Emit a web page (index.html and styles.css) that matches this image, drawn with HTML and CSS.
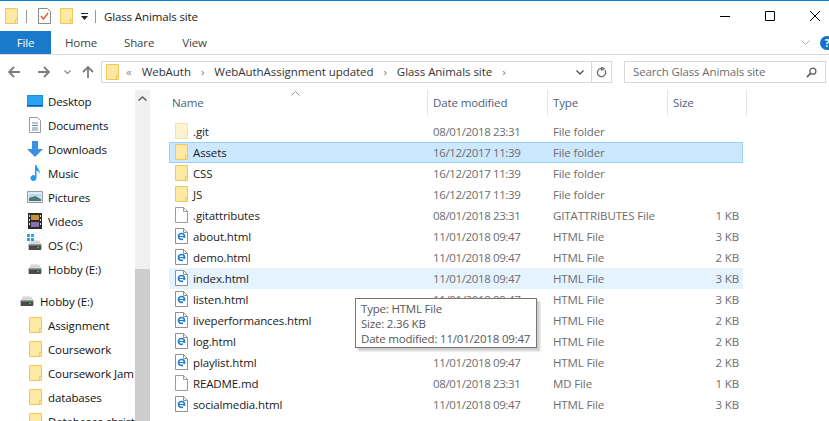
FILE: index.html
```html
<!DOCTYPE html>
<html lang="en">
<head>
    <meta charset="UTF-8">
    <meta name="viewport" content="width=device-width, initial-scale=1.0">
    <title>Glass Animals site</title>
    <link rel="stylesheet" href="styles.css">
</head>
<body>
    <svg class="defs" width="0" height="0">
        <symbol id="folder" viewBox="0 0 13 16">
            <path d="M.5.5h12v15H.5z" fill="#fde9a4" stroke="#eec95a"/>
            <path d="M10.5 15.5v-4h2" fill="none" stroke="#eec95a"/>
        </symbol>
        <symbol id="page" viewBox="0 0 13 16">
            <path d="M.5.5h8l4 4v11H.5z" fill="#fff" stroke="#9a9a9a"/>
            <path d="M8.500.5v4h4" fill="none" stroke="#9a9a9a"/>
        </symbol>
        <symbol id="html" viewBox="0 0 13 16">
            <path d="M.5.5h8l4 4v11H.5z" fill="#fff" stroke="#8b9099"/>
            <path d="M8.500.5v4h4" fill="none" stroke="#8b9099"/>
            <circle cx="6.500" cy="8.500" r="3" fill="none" stroke="#1f7fd0" stroke-width="1.700"/>
            <path d="M4 8.500h5" stroke="#1f7fd0"/>
            <path d="M8 10h2v2H8z" fill="#fff"/>
        </symbol>
        <symbol id="drive" viewBox="0 0 15 11">
            <path d="M3 .5h9L14.500 5h-14z" fill="#d8d8d8"/>
            <path d="M.5 5h14v5a1 1 0 0 1-1 1h-12a1 1 0 0 1-1-1z" fill="#4a4a4a"/>
            <path d="M.5 5h14v1h-14z" fill="#9c9c9c"/>
            <path d="M10 7.500h2v1.500h-2z" fill="#35d04a"/>
        </symbol>
    </svg>

    <div class="titlebar">
        <svg class="ico-folder"><use href="#folder"/></svg>
        <span class="qa-sep first"></span>
        <svg class="ico-props" viewBox="0 0 13 16">
            <path d="M.5.5h9l3 3v12H.5z" fill="#fbfbfb" stroke="#8a8a8a"/>
            <path d="M3 8l2.500 3L10 5" fill="none" stroke="#e0602f" stroke-width="1.400"/>
        </svg>
        <svg class="ico-folder second"><use href="#folder"/></svg>
        <svg class="qa-drop" viewBox="0 0 7 7">
            <path d="M0 0h7v1H0zM0 3h7L3.500 7z" fill="#222"/>
        </svg>
        <span class="qa-sep"></span>
        <span class="title">Glass Animals site</span>
        <div class="winbtns">
            <svg viewBox="0 0 10 10" class="winbtn"><path d="M0 5.500h10" stroke="#000"/></svg>
            <svg viewBox="0 0 10 10" class="winbtn"><path d="M.5.500h9v9h-9z" fill="none" stroke="#000"/></svg>
            <svg viewBox="0 0 10 10" class="winbtn"><path d="M0 0l10 10M10 0L0 10" stroke="#000"/></svg>
        </div>
    </div>

    <div class="ribbon">
        <span class="tab file">File</span>
        <span class="tab home">Home</span>
        <span class="tab share">Share</span>
        <span class="tab">View</span>
        <svg class="rib-chev" viewBox="0 0 9 5"><path d="M.5.500l4 4 4-4" fill="none" stroke="#a9a9a9"/></svg>
        <span class="help">?</span>
    </div>

    <div class="navbar">
        <svg class="nav-ico" viewBox="0 0 12 12"><path d="M12 6H1.500M6 1L1 6l5 5" fill="none" stroke="#7d7d7d" stroke-width="1.800"/></svg>
        <svg class="nav-ico fwd" viewBox="0 0 12 12"><path d="M0 6h10.500M6 1l5 5-5 5" fill="none" stroke="#7d7d7d" stroke-width="1.800"/></svg>
        <svg class="nav-drop" viewBox="0 0 7 4"><path d="M.5.500l3 3 3-3" fill="none" stroke="#8a8a8a" stroke-width="1.200"/></svg>
        <svg class="nav-ico up" viewBox="0 0 12 12"><path d="M6 12V1.500M1 6l5-5 5 5" fill="none" stroke="#7d7d7d" stroke-width="1.800"/></svg>
        <div class="address">
            <svg class="ico-folder"><use href="#folder"/></svg>
            <span class="crumb crumb-more">«</span>
            <span class="crumb">WebAuth</span>
            <span class="crumb crumb-arrow">›</span>
            <span class="crumb">WebAuthAssignment updated</span>
            <span class="crumb crumb-arrow">›</span>
            <span class="crumb">Glass Animals site</span>
            <span class="crumb crumb-arrow">›</span>
            <svg class="addr-chev" viewBox="0 0 8 5"><path d="M.5.500L4 4 7.500.500" fill="none" stroke="#555" stroke-width="1.400"/></svg>
            <span class="addr-refresh">
                <svg viewBox="0 0 12 12"><path d="M9.800 3.500A4.500 4.500 0 1 1 6 1.500M6 0v3.500l3-1.700z" fill="none" stroke="#707070" stroke-width="1.400"/></svg>
            </span>
        </div>
        <div class="search">
            <span class="search-text">Search Glass Animals site</span>
            <svg viewBox="0 0 12 12"><circle cx="7.500" cy="4.500" r="3.300" fill="none" stroke="#666" stroke-width="1.400"/><path d="M5 7l-4 4" stroke="#666" stroke-width="2"/></svg>
        </div>
    </div>

    <div class="main">
        <div class="side">
            <ul class="tree">
                <li><svg class="tree-ico" viewBox="0 0 16 12"><path d="M0 0h16v12H0z" fill="#1c8fe6"/><path d="M1 1h14v9H1z" fill="#2aa3f5"/><path d="M0 10.500h16" stroke="#0c5fa8"/></svg>Desktop</li>
                <li><svg class="tree-ico" viewBox="0 0 16 16"><path d="M2.500.5h8l3 3v12h-11z" fill="#fff" stroke="#9a9a9a"/><path d="M5 6h6M5 8.500h6M5 11h6M5 13h6" stroke="#5f8fb8"/></svg>Documents</li>
                <li><svg class="tree-ico" viewBox="0 0 16 16"><path d="M5 0h6v8h5l-8 8-8-8h5z" fill="#3b8fe0"/></svg>Downloads</li>
                <li><svg class="tree-ico" viewBox="0 0 16 16"><path d="M8 0h1.500c0 3 4 4 3 9C12 6.500 10.500 6 9.500 5.500V13a3 3 0 1 1-1.500-2.600z" fill="#1e9cf0"/></svg>Music</li>
                <li><svg class="tree-ico" viewBox="0 0 16 12"><path d="M.5.500h15v11H.5z" fill="#dfe9ee" stroke="#9a9a9a"/><path d="M2 3h12v3l-12 1z" fill="#bcd7ea"/><path d="M2 7l6-2 6 3v2H2z" fill="#4c7a7c"/></svg>Pictures</li>
                <li><svg class="tree-ico" viewBox="0 0 14 16"><path d="M0 0h14v16H0z" fill="#2c2c2c"/><path d="M3 2h8v5H3z" fill="#c98f3c"/><path d="M3 9h8v5H3z" fill="#8a6fb0"/><path d="M1 2h1v2H1zM1 6h1v2H1zM1 10h1v2H1zM12 2h1v2h-1zM12 6h1v2h-1zM12 10h1v2h-1z" fill="#ddd"/></svg>Videos</li>
                <li class="os"><span class="os-ico"><svg class="win-logo" viewBox="0 0 7 7"><path d="M0 0h3v3H0zM4 0h3v3H4zM0 4h3v3H0zM4 4h3v3H4z" fill="#29a8ec"/></svg><svg class="tree-ico drive-ico"><use href="#drive"/></svg></span>OS (C:)</li>
                <li><svg class="tree-ico drive-ico"><use href="#drive"/></svg>Hobby (E:)</li>
            </ul>
            <ul class="tree second">
                <li class="root"><svg class="tree-ico drive-ico"><use href="#drive"/></svg>Hobby (E:)</li>
                <li><svg class="tree-folder"><use href="#folder"/></svg>Assignment</li>
                <li><svg class="tree-folder"><use href="#folder"/></svg>Coursework</li>
                <li><svg class="tree-folder"><use href="#folder"/></svg>Coursework Jam</li>
                <li><svg class="tree-folder"><use href="#folder"/></svg>databases</li>
                <li><svg class="tree-folder"><use href="#folder"/></svg>Databases christ</li>
            </ul>
        </div>
        <div class="scroll">
            <svg class="scroll-up" viewBox="0 0 9 5"><path d="M.5 4.500l4-3.500 4 3.500" fill="none" stroke="#606060" stroke-width="1.500"/></svg>
            <div class="thumb"></div>
        </div>

        <div class="files">
            <svg class="sort" viewBox="0 0 9 5"><path d="M.5 4.500l4-4 4 4" fill="none" stroke="#999"/></svg>
            <div class="cols">
                <span>Name</span>
                <span>Date modified</span>
                <span>Type</span>
                <span>Size</span>
            </div>
            <div class="row"><span class="name dim"><svg class="f-ico"><use href="#folder"/></svg>.git</span><span class="date">08/01/2018 23:31</span><span>File folder</span><span></span></div>
            <div class="row selected"><span class="name"><svg class="f-ico"><use href="#folder"/></svg>Assets</span><span class="date">16/12/2017 11:39</span><span>File folder</span><span></span></div>
            <div class="row"><span class="name"><svg class="f-ico"><use href="#folder"/></svg>CSS</span><span class="date">16/12/2017 11:39</span><span>File folder</span><span></span></div>
            <div class="row"><span class="name"><svg class="f-ico"><use href="#folder"/></svg>JS</span><span class="date">16/12/2017 11:39</span><span>File folder</span><span></span></div>
            <div class="row"><span class="name"><svg class="f-ico"><use href="#page"/></svg>.gitattributes</span><span class="date">08/01/2018 23:31</span><span>GITATTRIBUTES File</span><span>1 KB</span></div>
            <div class="row"><span class="name"><svg class="f-ico"><use href="#html"/></svg>about.html</span><span class="date">11/01/2018 09:47</span><span>HTML File</span><span>3 KB</span></div>
            <div class="row"><span class="name"><svg class="f-ico"><use href="#html"/></svg>demo.html</span><span class="date">11/01/2018 09:47</span><span>HTML File</span><span>2 KB</span></div>
            <div class="row hover"><span class="name"><svg class="f-ico"><use href="#html"/></svg>index.html</span><span class="date">11/01/2018 09:47</span><span>HTML File</span><span>3 KB</span></div>
            <div class="row"><span class="name"><svg class="f-ico"><use href="#html"/></svg>listen.html</span><span class="date">11/01/2018 09:47</span><span>HTML File</span><span>3 KB</span></div>
            <div class="row"><span class="name"><svg class="f-ico"><use href="#html"/></svg>liveperformances.html</span><span class="date">11/01/2018 09:47</span><span>HTML File</span><span>2 KB</span></div>
            <div class="row"><span class="name"><svg class="f-ico"><use href="#html"/></svg>log.html</span><span class="date">11/01/2018 09:47</span><span>HTML File</span><span>2 KB</span></div>
            <div class="row"><span class="name"><svg class="f-ico"><use href="#html"/></svg>playlist.html</span><span class="date">11/01/2018 09:47</span><span>HTML File</span><span>2 KB</span></div>
            <div class="row"><span class="name"><svg class="f-ico"><use href="#page"/></svg>README.md</span><span class="date">08/01/2018 23:31</span><span>MD File</span><span>1 KB</span></div>
            <div class="row"><span class="name"><svg class="f-ico"><use href="#html"/></svg>socialmedia.html</span><span class="date">11/01/2018 09:47</span><span>HTML File</span><span>3 KB</span></div>
        </div>
    </div>

    <div class="tooltip">
        <div>Type: HTML File</div>
        <div>Size: 2.36 KB</div>
        <div>Date modified: 11/01/2018 09:47</div>
    </div>
</body>
</html>
```

FILE: styles.css
```css
* {
    box-sizing: border-box;
}
body {
    font-family: "Open Sans", "Noto Sans", sans-serif;
    font-size: 11.5px;
    letter-spacing: -0.13px;
    margin: 0;
    height: 421px;
    overflow: hidden;
    background: #fff;
    color: #1a1a1a;
    border-top: 1px solid #0a7fd8;
}
svg {
    display: block;
    flex: none;
}
.defs {
    position: absolute;
}
ul {
    list-style: none;
    margin: 0;
    padding: 0;
}

/* title bar */
.titlebar {
    display: flex;
    align-items: center;
    height: 30px;
    padding-left: 5px;
}
.ico-folder {
    width: 13px;
    height: 16px;
}
.ico-props {
    width: 13px;
    height: 16px;
    margin-left: 11px;
}
.ico-folder.second {
    margin-left: 9px;
}
.qa-drop {
    width: 7px;
    height: 7px;
    margin-left: 8px;
}
.qa-sep {
    width: 1px;
    height: 13px;
    background: #999;
    margin-left: 7px;
}
.qa-sep.first {
    margin-left: 8px;
}
.title {
    margin-left: 8px;
    color: #222;
}
.winbtns {
    display: flex;
    gap: 35px;
    margin-left: auto;
    margin-right: 9px;
}
.winbtn {
    width: 10px;
    height: 10px;
}

/* ribbon */
.ribbon {
    display: flex;
    align-items: center;
    height: 24px;
    border-bottom: 1px solid #dadbdc;
}
.tab {
    color: #444;
}
.tab.file {
    width: 51px;
    height: 23px;
    line-height: 23px;
    background: #1979ca;
    color: #fff;
    text-align: center;
    margin-right: 14px;
}
.tab.home {
    margin-right: 27px;
}
.tab.share {
    margin-right: 28px;
}
.rib-chev {
    width: 9px;
    height: 5px;
    margin-left: auto;
    margin-right: 10px;
}
.help {
    width: 14px;
    height: 14px;
    line-height: 14px;
    border-radius: 50%;
    background: #1672c8;
    color: #fff;
    font-size: 10px;
    font-weight: bold;
    text-align: center;
    margin-right: -5px;
}

/* navigation row */
.navbar {
    display: flex;
    align-items: center;
    height: 35px;
    padding: 6px 3px 7px 8px;
}
.nav-ico {
    width: 12px;
    height: 12px;
}
.nav-ico.fwd {
    margin-left: 18px;
}
.nav-drop {
    width: 7px;
    height: 4px;
    margin-left: 14px;
}
.nav-ico.up {
    margin-left: 11px;
}
.address {
    display: flex;
    align-items: center;
    gap: 10px;
    width: 511px;
    height: 22px;
    margin-left: 7px;
    padding-left: 4px;
    border: 1px solid #d9d9d9;
    color: #333;
    letter-spacing: -0.05px;
}
.crumb {
    padding-bottom: 2px;
}
.crumb-more {
    color: #888;
    margin-left: -3px;
}
.crumb-arrow {
    color: #777;
}
.addr-chev {
    width: 8px;
    height: 5px;
    margin-left: auto;
}
.addr-refresh {
    display: flex;
    align-items: center;
    justify-content: center;
    width: 20px;
    height: 100%;
    margin-left: -3px;
    border-left: 1px solid #d9d9d9;
}
.addr-refresh svg {
    width: 11px;
    height: 11px;
}
.search {
    display: flex;
    align-items: center;
    justify-content: space-between;
    width: 202px;
    height: 22px;
    margin-left: 12px;
    padding: 0 8px 0 8px;
    border: 1px solid #d9d9d9;
    color: #6d6d6d;
}
.search-text {
    padding-bottom: 2px;
}
.search svg {
    width: 11px;
    height: 11px;
}

/* main area */
.main {
    display: flex;
    height: 331px;
}
.side {
    width: 135px;
    overflow: hidden;
    white-space: nowrap;
    color: #111;
}
.tree:first-child {
    margin-top: -1px;
}
.tree li {
    display: flex;
    align-items: center;
    height: 24px;
    padding-left: 27px;
}
.tree-ico {
    width: 16px;
    height: 16px;
    margin-right: 5px;
}
.drive-ico {
    width: 14px;
    height: 10px;
    margin-left: 1px;
    margin-right: 6px;
}
.os-ico {
    position: relative;
    display: block;
}
.win-logo {
    position: absolute;
    left: 0;
    top: -6px;
    width: 7px;
    height: 7px;
}
.tree-folder {
    width: 13px;
    height: 16px;
    margin-left: 2px;
    margin-right: 6px;
}
.tree.second {
    margin-top: 8px;
}
.tree .root {
    padding-left: 19px;
}
.scroll {
    width: 15px;
    background: #f0f0f0;
}
.scroll-up {
    width: 9px;
    height: 5px;
    margin: 6px auto 0;
}
.thumb {
    height: 152px;
    margin-top: 168px;
    background: #cdcdcd;
}

.files {
    position: relative;
    width: 578px;
    margin-left: 19px;
    color: #6d6d6d;
}
.sort {
    position: absolute;
    left: 122px;
    top: 1px;
    width: 9px;
    height: 5px;
}
.cols {
    display: grid;
    grid-template-columns: 259px 120px 120px 79px;
    height: 26px;
    margin-bottom: 5px;
    color: #4c607a;
}
.cols span {
    display: flex;
    align-items: center;
    padding: 0 0 2px 5px;
    border-right: 1px solid #e5e5e5;
}
.cols span:first-child {
    padding-left: 3px;
}
.row {
    display: grid;
    grid-template-columns: 259px 120px 120px 75px;
    align-items: center;
    width: 574px;
    height: 21px;
    border: 1px solid transparent;
}
.row span {
    padding: 0 0 1px 4px;
    white-space: nowrap;
}
.row span:last-child {
    text-align: right;
    padding-right: 5px;
}
.row .name {
    display: flex;
    align-items: center;
    padding-left: 5px;
    color: #1a1a1a;
}
.row .date {
    letter-spacing: -0.37px;
}
.f-ico {
    width: 13px;
    height: 16px;
    margin-right: 5px;
}
.name.dim .f-ico {
    opacity: 0.5;
}
.row.selected {
    background: #cce8ff;
    border-color: #99d1ff;
}
.row.hover {
    background: #e5f3ff;
    border-color: #e5f3ff;
}

.tooltip {
    position: absolute;
    left: 355px;
    top: 298px;
    width: 182px;
    height: 50px;
    padding: 0 5px;
    display: flex;
    flex-direction: column;
    justify-content: center;
    line-height: 15px;
    letter-spacing: -0.2px;
    background: #fff;
    border: 1px solid #767676;
    color: #575757;
    box-shadow: 3px 3px 2px rgba(0, 0, 0, 0.2);
    white-space: nowrap;
}
```
